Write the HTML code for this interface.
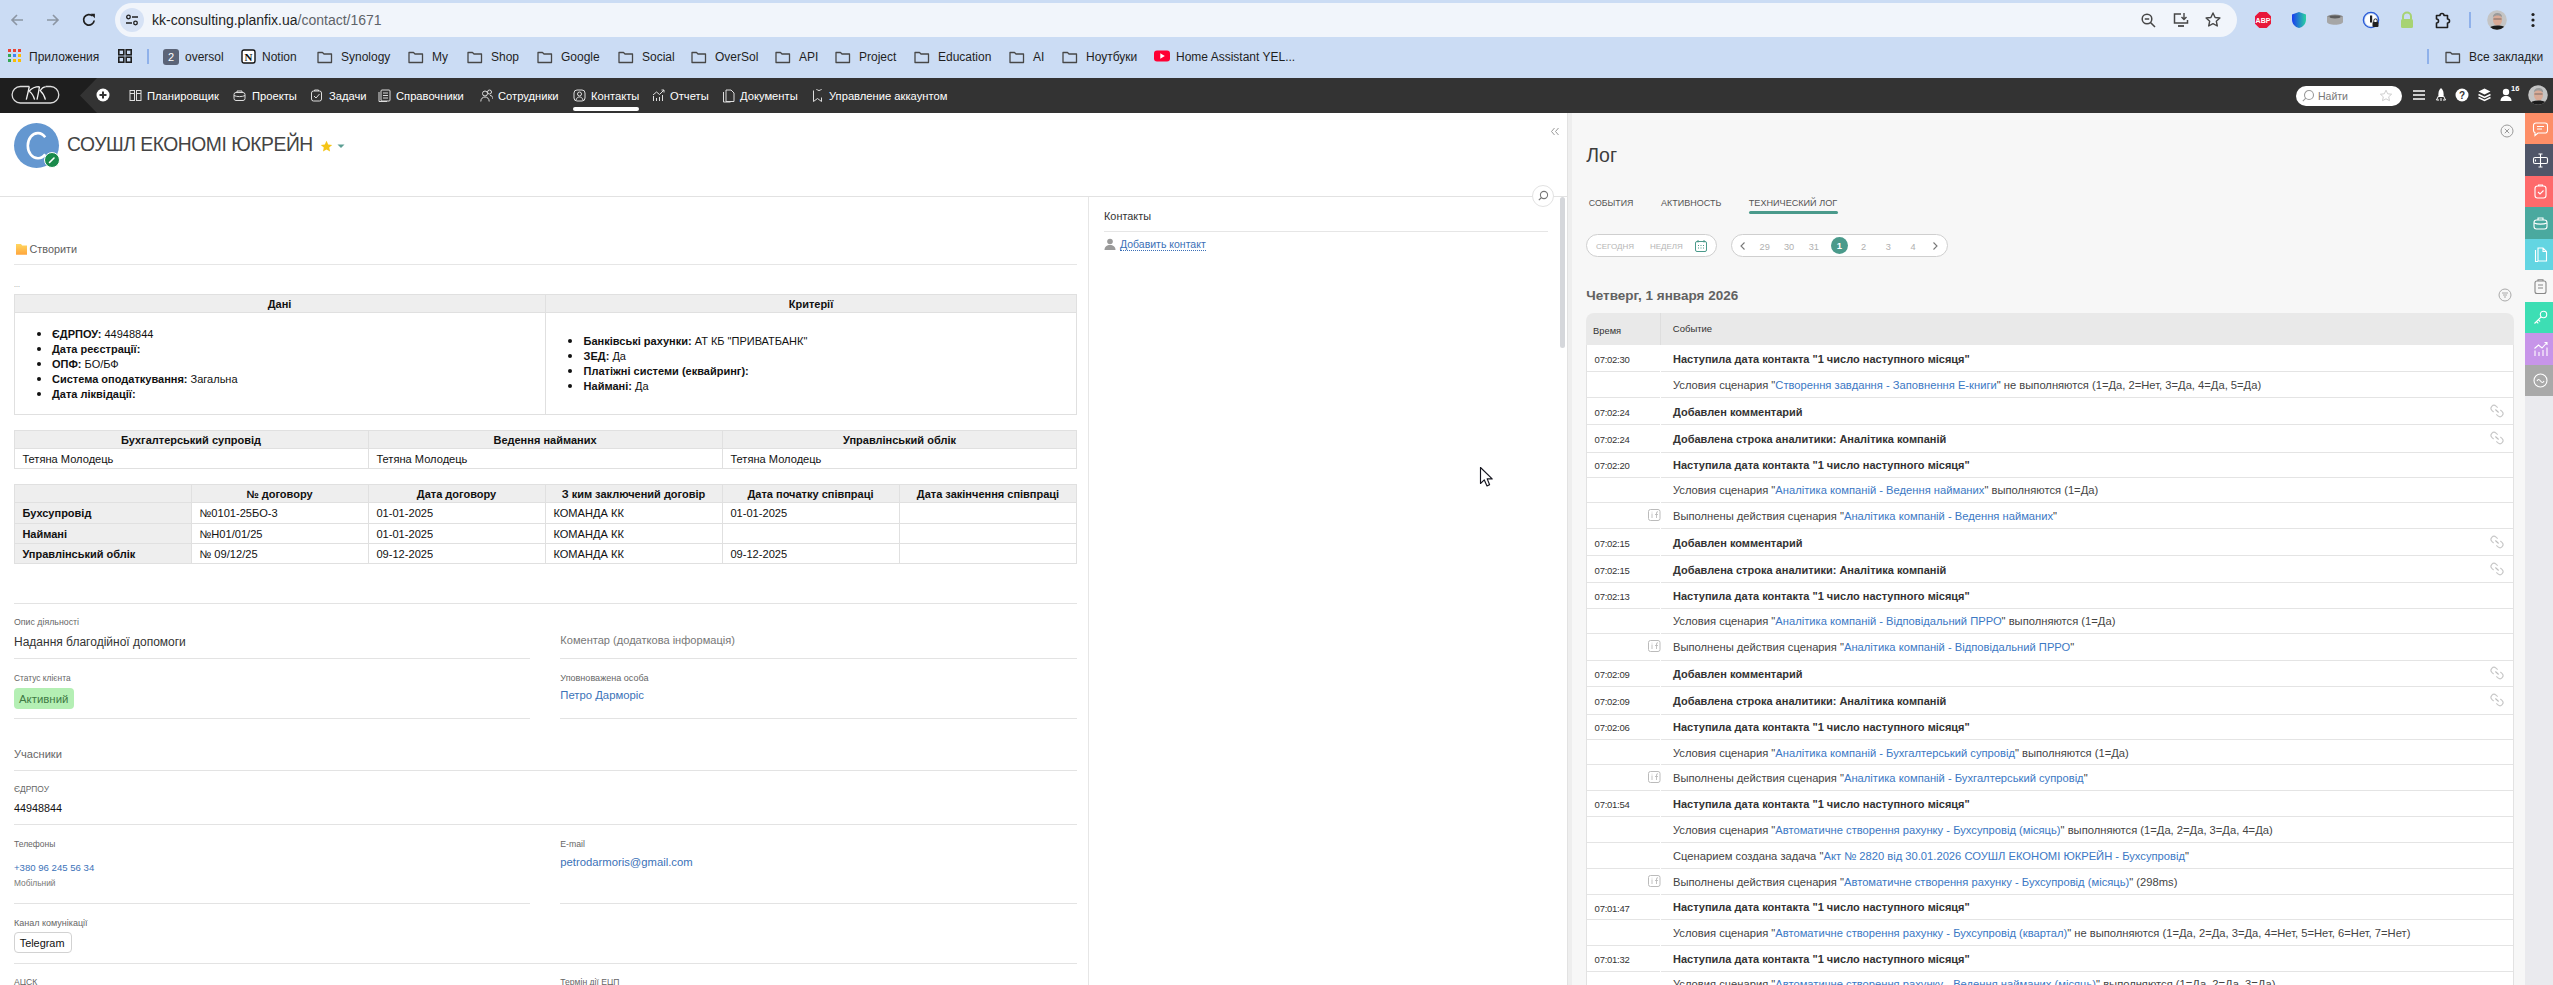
<!DOCTYPE html>
<html><head><meta charset="utf-8"><title>Planfix contact</title>
<style>
html,body{margin:0;padding:0;}
body{width:2553px;height:985px;overflow:hidden;position:relative;background:#fff;font-family:"Liberation Sans",sans-serif;}
.t{position:absolute;white-space:pre;}
.b{position:absolute;}
a{color:inherit;text-decoration:none;}
.lk{color:#3b78c4;}
</style></head><body>
<div class="b" style="left:0px;top:0px;width:2553px;height:78px;background:#cbdcf4;"></div>
<svg class="b" style="left:9px;top:12px;" width="16" height="16" viewBox="0 0 16 16"><path d="M14 8H3 M8 3L3 8l5 5" fill="none" stroke="#8c96a3" stroke-width="1.6"/></svg>
<svg class="b" style="left:45px;top:12px;" width="16" height="16" viewBox="0 0 16 16"><path d="M2 8h11 M8 3l5 5-5 5" fill="none" stroke="#8c96a3" stroke-width="1.6"/></svg>
<svg class="b" style="left:81px;top:12px;" width="16" height="16" viewBox="0 0 16 16"><path d="M13.2 8.5A5.3 5.3 0 1 1 11.6 4" fill="none" stroke="#1f1f1f" stroke-width="1.7"/><path d="M9.5 1.8h4.4v4.4z" fill="#1f1f1f"/></svg>
<div class="b" style="left:115px;top:3px;width:2122px;height:34px;background:#f1f5fb;border-radius:17px;"></div>
<div class="b" style="left:120px;top:8px;width:24px;height:24px;background:#d6e2f5;border-radius:12px;"></div>
<svg class="b" style="left:124px;top:12px;" width="16" height="16" viewBox="0 0 16 16"><circle cx="4.5" cy="5" r="1.8" fill="none" stroke="#1f1f1f" stroke-width="1.3"/><path d="M8 5h6 M2 11h6" stroke="#1f1f1f" stroke-width="1.3"/><circle cx="11.5" cy="11" r="1.8" fill="none" stroke="#1f1f1f" stroke-width="1.3"/></svg>
<div class="t " style="left:152px;top:10.00px;font-size:14px;line-height:20px;color:#1f1f1f;font-weight:400;">kk-consulting.planfix.ua<span style="color:#5e6369">/contact/1671</span></div>
<svg class="b" style="left:2140px;top:12px;" width="18" height="18" viewBox="0 0 18 18"><circle cx="7" cy="7" r="4.8" fill="none" stroke="#474747" stroke-width="1.5"/><path d="M4.8 7h4.4 M10.5 10.5l4.5 4.5" stroke="#474747" stroke-width="1.5"/></svg>
<svg class="b" style="left:2172px;top:11px;" width="18" height="18" viewBox="0 0 18 18"><path d="M9 3H2.5v9h13V9" fill="none" stroke="#474747" stroke-width="1.5"/><path d="M6 15h6" stroke="#474747" stroke-width="1.8"/><path d="M12 2v6 M9.5 6l2.5 2.5L14.5 6" fill="none" stroke="#474747" stroke-width="1.4"/></svg>
<svg class="b" style="left:2204px;top:11px;" width="18" height="18" viewBox="0 0 18 18"><path d="M9 2l2.1 4.5 4.8.5-3.6 3.2 1 4.8L9 12.6 4.7 15l1-4.8L2.1 7l4.8-.5z" fill="none" stroke="#474747" stroke-width="1.4" stroke-linejoin="round"/></svg>
<svg class="b" style="left:2254px;top:11px;" width="18" height="18" viewBox="0 0 18 18"><path d="M5.3 1h7.4L17 5.3v7.4L12.7 17H5.3L1 12.7V5.3z" fill="#e8173a"/><text x="9" y="12.2" font-family="Liberation Sans" font-weight="700" font-size="7" fill="#fff" text-anchor="middle">ABP</text></svg>
<svg class="b" style="left:2291px;top:11px;" width="16" height="18" viewBox="0 0 16 18"><defs><linearGradient id="sg" x1="0" x2="1"><stop offset="0" stop-color="#1a3cf0"/><stop offset="1" stop-color="#2ad3a0"/></linearGradient></defs><path d="M8 1l7 2.5v5c0 4.5-3 7.5-7 8.5-4-1-7-4-7-8.5v-5z" fill="url(#sg)"/></svg>
<svg class="b" style="left:2326px;top:13px;" width="18" height="14" viewBox="0 0 18 14"><ellipse cx="9" cy="4" rx="8" ry="2.6" fill="#8a8a8a"/><path d="M1 4v5c0 1.6 3.6 2.8 8 2.8s8-1.2 8-2.8V4" fill="#a6a6a6"/><ellipse cx="9" cy="4" rx="5.5" ry="1.4" fill="#5c5c5c"/></svg>
<svg class="b" style="left:2362px;top:11px;" width="18" height="18" viewBox="0 0 18 18"><circle cx="9" cy="9" r="7.6" fill="none" stroke="#2a5bd7" stroke-width="1.4"/><circle cx="9" cy="9" r="6" fill="#fff"/><rect x="8" y="4.5" width="2.2" height="7" fill="#1f1f1f"/><rect x="10.5" y="11" width="6" height="5" rx="1" fill="#1f1f1f"/><path d="M11.8 11v-1.4a1.7 1.7 0 0 1 3.4 0V11" fill="none" stroke="#1f1f1f" stroke-width="1"/></svg>
<svg class="b" style="left:2400px;top:11px;" width="14" height="18" viewBox="0 0 14 18"><path d="M3 8V5.5a4 4 0 0 1 8 0V8" fill="none" stroke="#a7d373" stroke-width="2"/><rect x="1" y="8" width="12" height="9" rx="1.5" fill="#a7d373"/></svg>
<svg class="b" style="left:2434px;top:11px;" width="18" height="18" viewBox="0 0 18 18"><path d="M2.5 4.5h3.5a2 2 0 0 1 4 0h3.5v3.5a2 2 0 0 1 0 4v4.5h-11v-4.5a2 2 0 0 0 0-4z" fill="none" stroke="#1f1f1f" stroke-width="1.6" stroke-linejoin="round"/></svg>
<div class="b" style="left:2469px;top:12px;width:2px;height:16px;background:#8fb1ea;"></div>
<svg class="b" style="left:2487px;top:10px;" width="20" height="20" viewBox="0 0 20 20"><defs><clipPath id="avc"><circle cx="10" cy="10" r="9.8"/></clipPath></defs><g clip-path="url(#avc)"><rect width="20" height="20" fill="#c4c4c4"/><ellipse cx="10.5" cy="9.8" rx="4.6" ry="5.8" fill="#d9aa96"/><path d="M5.8 7.5c0-3 2-4.6 4.7-4.6s4.7 1.6 4.7 4.6c-1.2-1.4-2.8-2-4.7-2s-3.5.6-4.7 2z" fill="#9a9a9a"/><path d="M6.5 9h8" stroke="#555" stroke-width="0.7"/><path d="M0 21c1.5-4 5-5.5 10.5-5.5S19 17 20.5 21z" fill="#1b1b1b"/></g></svg>
<svg class="b" style="left:2530px;top:11px;" width="6" height="18" viewBox="0 0 6 18"><circle cx="3" cy="3.5" r="1.6" fill="#1f1f1f"/><circle cx="3" cy="9" r="1.6" fill="#1f1f1f"/><circle cx="3" cy="14.5" r="1.6" fill="#1f1f1f"/></svg>
<svg class="b" style="left:8px;top:49px;" width="14" height="14" viewBox="0 0 14 14"><rect x="0" y="0" width="3" height="3" fill="#ea4335"/><rect x="5" y="0" width="3" height="3" fill="#ea4335"/><rect x="10" y="0" width="3" height="3" fill="#ea4335"/><rect x="0" y="5" width="3" height="3" fill="#34a853"/><rect x="5" y="5" width="3" height="3" fill="#4285f4"/><rect x="10" y="5" width="3" height="3" fill="#fbbc04"/><rect x="0" y="10" width="3" height="3" fill="#34a853"/><rect x="5" y="10" width="3" height="3" fill="#fbbc04"/><rect x="10" y="10" width="3" height="3" fill="#fbbc04"/></svg>
<div class="t " style="left:29px;top:48.50px;font-size:12px;line-height:16px;color:#1f1f1f;font-weight:400;">Приложения</div>
<svg class="b" style="left:118px;top:49px;" width="14" height="14" viewBox="0 0 14 14"><rect x="0.8" y="0.8" width="5" height="5" fill="none" stroke="#1f1f1f" stroke-width="1.6"/><rect x="8.2" y="0.8" width="5" height="5" fill="none" stroke="#1f1f1f" stroke-width="1.6"/><rect x="0.8" y="8.2" width="5" height="5" fill="none" stroke="#1f1f1f" stroke-width="1.6"/><rect x="8.2" y="8.2" width="5" height="5" fill="none" stroke="#1f1f1f" stroke-width="1.6"/></svg>
<div class="b" style="left:147px;top:49px;width:2px;height:15px;background:#8fb1ea;"></div>
<div class="b" style="left:163px;top:49px;width:16px;height:16px;background:#5b6477;border-radius:3px;"></div>
<div class="t " style="left:163px;top:48.50px;font-size:11px;line-height:16px;color:#fff;font-weight:400;"><span style="display:inline-block;width:16px;text-align:center">2</span></div>
<div class="t " style="left:185px;top:48.50px;font-size:12px;line-height:16px;color:#1f1f1f;font-weight:400;">oversol</div>
<svg class="b" style="left:241px;top:49px;" width="15" height="15" viewBox="0 0 15 15"><rect x="1" y="1" width="13" height="13" rx="2" fill="#fff" stroke="#111" stroke-width="1.4"/><text x="7.5" y="11.5" font-family="Liberation Serif" font-weight="700" font-size="11" fill="#111" text-anchor="middle">N</text></svg>
<div class="t " style="left:262px;top:48.50px;font-size:12px;line-height:16px;color:#1f1f1f;font-weight:400;">Notion</div>
<svg class="b" style="left:316px;top:48.5px;" width="18" height="16" viewBox="0 0 18 16"><path d="M2 3.5 h4.5 l1.5 1.5 h7.5 v8.5 h-13.5 z" fill="none" stroke="#474747" stroke-width="1.3" stroke-linejoin="round"/></svg>
<div class="t " style="left:341px;top:48.50px;font-size:12px;line-height:16px;color:#1f1f1f;font-weight:400;">Synology</div>
<svg class="b" style="left:407px;top:48.5px;" width="18" height="16" viewBox="0 0 18 16"><path d="M2 3.5 h4.5 l1.5 1.5 h7.5 v8.5 h-13.5 z" fill="none" stroke="#474747" stroke-width="1.3" stroke-linejoin="round"/></svg>
<div class="t " style="left:432px;top:48.50px;font-size:12px;line-height:16px;color:#1f1f1f;font-weight:400;">My</div>
<svg class="b" style="left:466px;top:48.5px;" width="18" height="16" viewBox="0 0 18 16"><path d="M2 3.5 h4.5 l1.5 1.5 h7.5 v8.5 h-13.5 z" fill="none" stroke="#474747" stroke-width="1.3" stroke-linejoin="round"/></svg>
<div class="t " style="left:491px;top:48.50px;font-size:12px;line-height:16px;color:#1f1f1f;font-weight:400;">Shop</div>
<svg class="b" style="left:536px;top:48.5px;" width="18" height="16" viewBox="0 0 18 16"><path d="M2 3.5 h4.5 l1.5 1.5 h7.5 v8.5 h-13.5 z" fill="none" stroke="#474747" stroke-width="1.3" stroke-linejoin="round"/></svg>
<div class="t " style="left:561px;top:48.50px;font-size:12px;line-height:16px;color:#1f1f1f;font-weight:400;">Google</div>
<svg class="b" style="left:617px;top:48.5px;" width="18" height="16" viewBox="0 0 18 16"><path d="M2 3.5 h4.5 l1.5 1.5 h7.5 v8.5 h-13.5 z" fill="none" stroke="#474747" stroke-width="1.3" stroke-linejoin="round"/></svg>
<div class="t " style="left:642px;top:48.50px;font-size:12px;line-height:16px;color:#1f1f1f;font-weight:400;">Social</div>
<svg class="b" style="left:690px;top:48.5px;" width="18" height="16" viewBox="0 0 18 16"><path d="M2 3.5 h4.5 l1.5 1.5 h7.5 v8.5 h-13.5 z" fill="none" stroke="#474747" stroke-width="1.3" stroke-linejoin="round"/></svg>
<div class="t " style="left:715px;top:48.50px;font-size:12px;line-height:16px;color:#1f1f1f;font-weight:400;">OverSol</div>
<svg class="b" style="left:774px;top:48.5px;" width="18" height="16" viewBox="0 0 18 16"><path d="M2 3.5 h4.5 l1.5 1.5 h7.5 v8.5 h-13.5 z" fill="none" stroke="#474747" stroke-width="1.3" stroke-linejoin="round"/></svg>
<div class="t " style="left:799px;top:48.50px;font-size:12px;line-height:16px;color:#1f1f1f;font-weight:400;">API</div>
<svg class="b" style="left:834px;top:48.5px;" width="18" height="16" viewBox="0 0 18 16"><path d="M2 3.5 h4.5 l1.5 1.5 h7.5 v8.5 h-13.5 z" fill="none" stroke="#474747" stroke-width="1.3" stroke-linejoin="round"/></svg>
<div class="t " style="left:859px;top:48.50px;font-size:12px;line-height:16px;color:#1f1f1f;font-weight:400;">Project</div>
<svg class="b" style="left:913px;top:48.5px;" width="18" height="16" viewBox="0 0 18 16"><path d="M2 3.5 h4.5 l1.5 1.5 h7.5 v8.5 h-13.5 z" fill="none" stroke="#474747" stroke-width="1.3" stroke-linejoin="round"/></svg>
<div class="t " style="left:938px;top:48.50px;font-size:12px;line-height:16px;color:#1f1f1f;font-weight:400;">Education</div>
<svg class="b" style="left:1008px;top:48.5px;" width="18" height="16" viewBox="0 0 18 16"><path d="M2 3.5 h4.5 l1.5 1.5 h7.5 v8.5 h-13.5 z" fill="none" stroke="#474747" stroke-width="1.3" stroke-linejoin="round"/></svg>
<div class="t " style="left:1033px;top:48.50px;font-size:12px;line-height:16px;color:#1f1f1f;font-weight:400;">AI</div>
<svg class="b" style="left:1061px;top:48.5px;" width="18" height="16" viewBox="0 0 18 16"><path d="M2 3.5 h4.5 l1.5 1.5 h7.5 v8.5 h-13.5 z" fill="none" stroke="#474747" stroke-width="1.3" stroke-linejoin="round"/></svg>
<div class="t " style="left:1086px;top:48.50px;font-size:12px;line-height:16px;color:#1f1f1f;font-weight:400;">Ноутбуки</div>
<svg class="b" style="left:1154px;top:50px;" width="16" height="12" viewBox="0 0 16 12"><rect x="0" y="0.5" width="16" height="11" rx="3" fill="#ff0033"/><path d="M6.3 3.3v5.4L10.8 6z" fill="#fff"/></svg>
<div class="t " style="left:1176px;top:48.50px;font-size:12px;line-height:16px;color:#1f1f1f;font-weight:400;">Home Assistant YEL...</div>
<div class="b" style="left:2427px;top:49px;width:2px;height:15px;background:#8fb1ea;"></div>
<svg class="b" style="left:2444px;top:48.5px;" width="18" height="16" viewBox="0 0 18 16"><path d="M2 3.5 h4.5 l1.5 1.5 h7.5 v8.5 h-13.5 z" fill="none" stroke="#474747" stroke-width="1.3" stroke-linejoin="round"/></svg>
<div class="t " style="left:2469px;top:48.50px;font-size:12px;line-height:16px;color:#1f1f1f;font-weight:400;">Все закладки</div>
<div class="b" style="left:0px;top:78px;width:2553px;height:35px;background:#333333;"></div>
<svg class="b" style="left:0px;top:78px;" width="97" height="35" viewBox="0 0 97 35"><path d="M0 0H97L80 17.5L97 35H0z" fill="#1e1e1e"/></svg>
<svg class="b" style="left:11px;top:85px;" width="50" height="20" viewBox="0 0 50 20"><g transform="translate(-11 -85)" fill="none" stroke-width="1.3"><path d="M29.3 86.5H20.35A8.25 8.25 0 0 0 20.35 103H50.55A8.25 8.25 0 0 0 50.55 86.5H45.6" stroke="#dcdcdc"/><path d="M29.3 86.5Q28 93 26.3 99.6M29 91.3Q33 86.6 39.5 86.6M29.5 91.5Q33 94 34.6 99.6M39.5 86.6Q38.5 93 37 99.6M40 91Q42.5 86.9 45.6 86.9M40.5 91Q44 94 45.4 99.6" stroke="#f0f0f0"/></g></svg>
<svg class="b" style="left:96px;top:88px;" width="14" height="14" viewBox="0 0 14 14"><circle cx="7" cy="7" r="6.5" fill="#fff"/><path d="M7 3.5v7 M3.5 7h7" stroke="#333" stroke-width="2"/></svg>
<svg class="b" style="left:129px;top:89px;" width="13" height="14" viewBox="0 0 13 14"><rect x="1" y="1.5" width="4.5" height="10" fill="none" stroke="#ddd" stroke-width="1"/><rect x="7.5" y="1.5" width="4.5" height="10" fill="none" stroke="#ddd" stroke-width="1"/><path d="M1 4.5h4.5 M7.5 4.5h4.5" stroke="#ddd"/></svg>
<div class="t " style="left:147px;top:88.00px;font-size:11.2px;line-height:16px;color:#ffffff;font-weight:400;">Планировщик</div>
<svg class="b" style="left:233px;top:89px;" width="13" height="14" viewBox="0 0 13 14"><rect x="1" y="3.5" width="11" height="8" rx="2" fill="none" stroke="#ddd" stroke-width="1"/><path d="M1 6.5c3 1.5 8 1.5 11 0 M4 3.5V2h5v1.5" fill="none" stroke="#ddd"/></svg>
<div class="t " style="left:252px;top:88.00px;font-size:11.2px;line-height:16px;color:#ffffff;font-weight:400;">Проекты</div>
<svg class="b" style="left:310px;top:89px;" width="13" height="14" viewBox="0 0 13 14"><rect x="1.5" y="2" width="10" height="10" rx="2" fill="none" stroke="#ddd" stroke-width="1"/><path d="M4 7l2 2 3.5-4 M4.5 2V1h4v1" fill="none" stroke="#ddd"/></svg>
<div class="t " style="left:329px;top:88.00px;font-size:11.2px;line-height:16px;color:#ffffff;font-weight:400;">Задачи</div>
<svg class="b" style="left:378px;top:89px;" width="13" height="14" viewBox="0 0 13 14"><rect x="3" y="1" width="9" height="11" rx="1" fill="none" stroke="#ddd" stroke-width="1"/><path d="M1 3v9.5h8 M5 4h5 M5 6.5h5 M5 9h5" fill="none" stroke="#ddd"/></svg>
<div class="t " style="left:396px;top:88.00px;font-size:11.2px;line-height:16px;color:#ffffff;font-weight:400;">Справочники</div>
<svg class="b" style="left:480px;top:89px;" width="13" height="14" viewBox="0 0 13 14"><circle cx="5" cy="4.5" r="2.5" fill="none" stroke="#ddd"/><path d="M0.8 12.5c0-3 2-4.5 4.2-4.5s4.2 1.5 4.2 4.5" fill="none" stroke="#ddd"/><circle cx="9.5" cy="3" r="2" fill="none" stroke="#ddd"/><path d="M10 6.5c1.5 0 3 1 3 3.5" fill="none" stroke="#ddd"/></svg>
<div class="t " style="left:498px;top:88.00px;font-size:11.2px;line-height:16px;color:#ffffff;font-weight:400;">Сотрудники</div>
<svg class="b" style="left:573px;top:89px;" width="13" height="14" viewBox="0 0 13 14"><rect x="1" y="1" width="11" height="11" rx="3" fill="none" stroke="#ddd"/><circle cx="6.5" cy="5" r="2" fill="none" stroke="#ddd"/><path d="M3 11c.5-2 1.8-3 3.5-3s3 1 3.5 3" fill="none" stroke="#ddd"/></svg>
<div class="t " style="left:591px;top:88.00px;font-size:11.2px;line-height:16px;color:#ffffff;font-weight:400;">Контакты</div>
<svg class="b" style="left:652px;top:89px;" width="13" height="14" viewBox="0 0 13 14"><path d="M1.5 12V7 M4.5 12V9 M7.5 12V8 M10.5 12V6 M1 6l3.5-3 3 2.5L12 1 M9.5 1H12v2.5" fill="none" stroke="#ddd"/></svg>
<div class="t " style="left:670px;top:88.00px;font-size:11.2px;line-height:16px;color:#ffffff;font-weight:400;">Отчеты</div>
<svg class="b" style="left:722px;top:89px;" width="13" height="14" viewBox="0 0 13 14"><path d="M4 1h5l3 3v8.5H4z M1.5 3v10h7" fill="none" stroke="#ddd"/></svg>
<div class="t " style="left:740px;top:88.00px;font-size:11.2px;line-height:16px;color:#ffffff;font-weight:400;">Документы</div>
<svg class="b" style="left:812px;top:89px;" width="13" height="14" viewBox="0 0 13 14"><path d="M1.5 1.5v11l4-3 4 3v-4 M7 1.5a3 3 0 1 1 0.01 0" fill="none" stroke="#ddd"/></svg>
<div class="t " style="left:829px;top:88.00px;font-size:11.2px;line-height:16px;color:#ffffff;font-weight:400;">Управление аккаунтом</div>
<div class="b" style="left:573px;top:107px;width:66px;height:4px;background:#fff;border-radius:2px;"></div>
<div class="b" style="left:2296px;top:86px;width:106px;height:20px;background:#fff;border-radius:10px;"></div>
<svg class="b" style="left:2301px;top:89px;" width="14" height="14" viewBox="0 0 14 14"><circle cx="8" cy="6" r="4.5" fill="none" stroke="#9a9a9a" stroke-width="1.1"/><path d="M4.8 9.2L1.8 12.2" stroke="#9a9a9a" stroke-width="1.1"/></svg>
<div class="t " style="left:2318px;top:89.00px;font-size:10.5px;line-height:14px;color:#777;font-weight:400;">Найти</div>
<svg class="b" style="left:2379px;top:89px;" width="14" height="14" viewBox="0 0 14 14"><path d="M7 1.2l1.7 3.6 3.9.4-2.9 2.6.8 3.9L7 9.8l-3.5 1.9.8-3.9L1.4 5.2l3.9-.4z" fill="none" stroke="#c8c8c8" stroke-width="0.9"/></svg>
<svg class="b" style="left:2412px;top:89px;" width="14" height="12" viewBox="0 0 14 12"><path d="M1 2h12 M1 6h12 M1 10h12" stroke="#fff" stroke-width="1.6"/></svg>
<svg class="b" style="left:2435px;top:87px;" width="12" height="16" viewBox="0 0 12 16"><path d="M6 1c2.5 2 3 5 2.5 9h-5C3 6 3.5 3 6 1z" fill="#fff"/><path d="M3.5 9L1.5 13h2.5 M8.5 9l2 4H8 M6 11v3" stroke="#fff" stroke-width="1" fill="none"/></svg>
<svg class="b" style="left:2455px;top:88px;" width="14" height="14" viewBox="0 0 14 14"><circle cx="7" cy="7" r="6.5" fill="#fff"/><text x="7" y="11" font-family="Liberation Sans" font-weight="700" font-size="10" fill="#333" text-anchor="middle">?</text></svg>
<svg class="b" style="left:2477px;top:87px;" width="15" height="16" viewBox="0 0 15 16"><path d="M7.5 1.5l6 3-6 3-6-3z" fill="#fff"/><path d="M1.5 7.5l6 3 6-3 M1.5 10.5l6 3 6-3" fill="none" stroke="#fff" stroke-width="1.5"/></svg>
<svg class="b" style="left:2500px;top:88px;" width="12" height="14" viewBox="0 0 12 14"><circle cx="6" cy="4" r="3.2" fill="#fff"/><path d="M0.5 13c0-3.5 2.5-5 5.5-5s5.5 1.5 5.5 5z" fill="#fff"/></svg>
<div class="t " style="left:2511px;top:84.00px;font-size:7.5px;line-height:10px;color:#fff;font-weight:700;">16</div>
<svg class="b" style="left:2528px;top:85px;" width="20" height="20" viewBox="0 0 20 20"><defs><clipPath id="avc"><circle cx="10" cy="10" r="9.8"/></clipPath></defs><g clip-path="url(#avc)"><rect width="20" height="20" fill="#c4c4c4"/><ellipse cx="10.5" cy="9.8" rx="4.6" ry="5.8" fill="#d9aa96"/><path d="M5.8 7.5c0-3 2-4.6 4.7-4.6s4.7 1.6 4.7 4.6c-1.2-1.4-2.8-2-4.7-2s-3.5.6-4.7 2z" fill="#9a9a9a"/><path d="M6.5 9h8" stroke="#555" stroke-width="0.7"/><path d="M0 21c1.5-4 5-5.5 10.5-5.5S19 17 20.5 21z" fill="#1b1b1b"/></g></svg>
<div class="b" style="left:14px;top:123px;width:45px;height:45px;background:#6497d0;border-radius:50%;"></div>
<svg class="b" style="left:14px;top:123px;" width="45" height="45" viewBox="0 0 45 45"><path d="M31.2 14.2A10 12.6 0 1 0 31.2 31.2" fill="none" stroke="#fff" stroke-width="2.6"/></svg>
<div class="b" style="left:44px;top:152px;width:16px;height:16px;background:#1a8a4b;border-radius:50%;border:1.5px solid #fff;box-sizing:border-box;"></div>
<svg class="b" style="left:47px;top:155px;" width="10" height="10" viewBox="0 0 10 10"><path d="M2.5 7.5L7 3" stroke="#fff" stroke-width="1.6" stroke-linecap="round"/></svg>
<div class="t " style="left:67px;top:133.30px;font-size:19.3px;line-height:24px;color:#444;font-weight:400;letter-spacing:-0.45px;">СОУШЛ ЕКОНОМІ ЮКРЕЙН</div>
<svg class="b" style="left:320px;top:140px;" width="13" height="13" viewBox="0 0 13 13"><path d="M6.5 .8l1.7 3.7 4 .4-3 2.7.9 4L6.5 9.6 3 11.6l.8-4-3-2.7 4-.4z" fill="#f5c518"/></svg>
<svg class="b" style="left:337px;top:144px;" width="8" height="5" viewBox="0 0 8 5"><path d="M0.5 0.5h7L4 4z" fill="#5c9e93"/></svg>
<svg class="b" style="left:1550px;top:127px;" width="10" height="9" viewBox="0 0 10 9"><path d="M4.5 1L1.5 4.5l3 3.5 M8.5 1l-3 3.5 3 3.5" fill="none" stroke="#999" stroke-width="1"/></svg>
<div class="b" style="left:0px;top:196px;width:1567px;height:1px;background:#e2e2e2;"></div>
<div class="b" style="left:1532px;top:185px;width:22px;height:22px;background:#fff;border:1px solid #e2e2e2;border-radius:50%;box-sizing:border-box;"></div>
<svg class="b" style="left:1537px;top:190px;" width="12" height="12" viewBox="0 0 12 12"><circle cx="7" cy="5" r="3.6" fill="none" stroke="#777" stroke-width="1.1"/><path d="M4.5 7.5L1.8 10.2" stroke="#777" stroke-width="1.1"/></svg>
<div class="b" style="left:1560px;top:197px;width:5px;height:151px;background:#d5d7db;border-radius:3px;"></div>
<div class="b" style="left:1567px;top:113px;width:5px;height:872px;background:#eeeeee;border-left:1px solid #e2e2e2;box-sizing:border-box;"></div>
<div class="b" style="left:1088px;top:197px;width:1px;height:788px;background:#e6e6e6;"></div>
<div class="t " style="left:1104px;top:209.00px;font-size:10.9px;line-height:14px;color:#333;font-weight:400;">Контакты</div>
<div class="b" style="left:1104px;top:231px;width:444px;height:1px;background:#e6e6e6;"></div>
<svg class="b" style="left:1104px;top:238px;" width="12" height="12" viewBox="0 0 12 12"><circle cx="6" cy="3.5" r="2.8" fill="#9a9a9a"/><path d="M0.5 12c0-3.5 2.5-5 5.5-5s5.5 1.5 5.5 5z" fill="#9a9a9a"/></svg>
<div class="t " style="left:1120px;top:237.00px;font-size:10.5px;line-height:14px;color:#3b6fb6;font-weight:400;"><span style="border-bottom:1px dotted #3b6fb6;">Добавить контакт</span></div>
<svg class="b" style="left:16px;top:244px;" width="12" height="11" viewBox="0 0 12 11"><defs><linearGradient id="fg" x1="0" y1="0" x2="0" y2="1"><stop offset="0" stop-color="#ffd760"/><stop offset="1" stop-color="#ffa53c"/></linearGradient></defs><path d="M0 0h5l1.2 1.6H11v9.2H0z" fill="url(#fg)"/></svg>
<div class="t " style="left:29.5px;top:242.00px;font-size:10.85px;line-height:14px;color:#606060;font-weight:400;">Створити</div>
<div class="b" style="left:14px;top:264px;width:1063px;height:1px;background:#e6e6e6;"></div>
<div class="t " style="left:14px;top:281.00px;font-size:7px;line-height:8px;color:#888;font-weight:400;">...</div>
<div class="b" style="left:14px;top:294px;width:1063px;height:121px;border:1px solid #e0e0e0;box-sizing:border-box;"></div>
<div class="b" style="left:15px;top:295px;width:1061px;height:17px;background:#eeeeee;border-bottom:1px solid #e0e0e0;"></div>
<div class="b" style="left:545px;top:294px;width:1px;height:121px;background:#e0e0e0;"></div>
<div class="t" style="left:14px;width:531px;text-align:center;top:296.80px;font-size:11px;line-height:14px;color:#111;font-weight:700;">Дані</div>
<div class="t" style="left:545px;width:532px;text-align:center;top:296.80px;font-size:11px;line-height:14px;color:#111;font-weight:700;">Критерії</div>
<div class="b" style="left:37px;top:332px;width:4px;height:4px;background:#111;border-radius:50%;"></div>
<div class="t " style="left:52px;top:326.70px;font-size:11px;line-height:15px;color:#111;font-weight:400;"><b>ЄДРПОУ:</b> 44948844</div>
<div class="b" style="left:37px;top:347px;width:4px;height:4px;background:#111;border-radius:50%;"></div>
<div class="t " style="left:52px;top:341.70px;font-size:11px;line-height:15px;color:#111;font-weight:400;"><b>Дата реєстрації:</b></div>
<div class="b" style="left:37px;top:362px;width:4px;height:4px;background:#111;border-radius:50%;"></div>
<div class="t " style="left:52px;top:356.70px;font-size:11px;line-height:15px;color:#111;font-weight:400;"><b>ОПФ:</b> БО/БФ</div>
<div class="b" style="left:37px;top:377px;width:4px;height:4px;background:#111;border-radius:50%;"></div>
<div class="t " style="left:52px;top:371.70px;font-size:11px;line-height:15px;color:#111;font-weight:400;"><b>Система оподаткування:</b> Загальна</div>
<div class="b" style="left:37px;top:392px;width:4px;height:4px;background:#111;border-radius:50%;"></div>
<div class="t " style="left:52px;top:386.70px;font-size:11px;line-height:15px;color:#111;font-weight:400;"><b>Дата ліквідації:</b></div>
<div class="b" style="left:568px;top:339px;width:4px;height:4px;background:#111;border-radius:50%;"></div>
<div class="t " style="left:583.6px;top:333.50px;font-size:11px;line-height:15px;color:#111;font-weight:400;"><b>Банківські рахунки:</b> АТ КБ &quot;ПРИВАТБАНК&quot;</div>
<div class="b" style="left:568px;top:354px;width:4px;height:4px;background:#111;border-radius:50%;"></div>
<div class="t " style="left:583.6px;top:348.50px;font-size:11px;line-height:15px;color:#111;font-weight:400;"><b>ЗЕД:</b> Да</div>
<div class="b" style="left:568px;top:369px;width:4px;height:4px;background:#111;border-radius:50%;"></div>
<div class="t " style="left:583.6px;top:363.50px;font-size:11px;line-height:15px;color:#111;font-weight:400;"><b>Платіжні системи (еквайринг):</b></div>
<div class="b" style="left:568px;top:384px;width:4px;height:4px;background:#111;border-radius:50%;"></div>
<div class="t " style="left:583.6px;top:378.50px;font-size:11px;line-height:15px;color:#111;font-weight:400;"><b>Наймані:</b> Да</div>
<div class="b" style="left:14px;top:430px;width:1063px;height:39px;border:1px solid #e0e0e0;box-sizing:border-box;"></div>
<div class="b" style="left:15px;top:431px;width:1061px;height:17px;background:#eeeeee;"></div>
<div class="b" style="left:15px;top:448px;width:1061px;height:1px;background:#e0e0e0;"></div>
<div class="b" style="left:368px;top:430px;width:1px;height:39px;background:#e0e0e0;"></div>
<div class="b" style="left:722px;top:430px;width:1px;height:39px;background:#e0e0e0;"></div>
<div class="t" style="left:14px;width:354px;text-align:center;top:433.20px;font-size:11px;line-height:14px;color:#111;font-weight:700;">Бухгалтерський супровід</div>
<div class="t " style="left:22.4px;top:452.30px;font-size:11.1px;line-height:14px;color:#111;font-weight:400;">Тетяна Молодець</div>
<div class="t" style="left:368px;width:354px;text-align:center;top:433.20px;font-size:11px;line-height:14px;color:#111;font-weight:700;">Ведення найманих</div>
<div class="t " style="left:376.4px;top:452.30px;font-size:11.1px;line-height:14px;color:#111;font-weight:400;">Тетяна Молодець</div>
<div class="t" style="left:722px;width:355px;text-align:center;top:433.20px;font-size:11px;line-height:14px;color:#111;font-weight:700;">Управлінський облік</div>
<div class="t " style="left:730.4px;top:452.30px;font-size:11.1px;line-height:14px;color:#111;font-weight:400;">Тетяна Молодець</div>
<div class="b" style="left:14px;top:484px;width:1063px;height:80px;border:1px solid #e0e0e0;box-sizing:border-box;"></div>
<div class="b" style="left:15px;top:485px;width:1061px;height:17px;background:#eeeeee;"></div>
<div class="b" style="left:15px;top:502px;width:176px;height:61px;background:#eeeeee;"></div>
<div class="b" style="left:15px;top:502px;width:1061px;height:1px;background:#e0e0e0;"></div>
<div class="b" style="left:15px;top:523px;width:1061px;height:1px;background:#e0e0e0;"></div>
<div class="b" style="left:15px;top:543px;width:1061px;height:1px;background:#e0e0e0;"></div>
<div class="b" style="left:191px;top:484px;width:1px;height:80px;background:#e0e0e0;"></div>
<div class="b" style="left:368px;top:484px;width:1px;height:80px;background:#e0e0e0;"></div>
<div class="b" style="left:545px;top:484px;width:1px;height:80px;background:#e0e0e0;"></div>
<div class="b" style="left:722px;top:484px;width:1px;height:80px;background:#e0e0e0;"></div>
<div class="b" style="left:899px;top:484px;width:1px;height:80px;background:#e0e0e0;"></div>
<div class="t" style="left:191px;width:177px;text-align:center;top:487.00px;font-size:11px;line-height:14px;color:#111;font-weight:700;">№ договору</div>
<div class="t" style="left:368px;width:177px;text-align:center;top:487.00px;font-size:11px;line-height:14px;color:#111;font-weight:700;">Дата договору</div>
<div class="t" style="left:545px;width:177px;text-align:center;top:487.00px;font-size:11px;line-height:14px;color:#111;font-weight:700;">З ким заключений договір</div>
<div class="t" style="left:722px;width:177px;text-align:center;top:487.00px;font-size:11px;line-height:14px;color:#111;font-weight:700;">Дата початку співпраці</div>
<div class="t" style="left:899px;width:178px;text-align:center;top:487.00px;font-size:11px;line-height:14px;color:#111;font-weight:700;">Дата закінчення співпраці</div>
<div class="t " style="left:22.4px;top:506.20px;font-size:11px;line-height:14px;color:#111;font-weight:700;">Бухсупровід</div>
<div class="t " style="left:199.4px;top:506.20px;font-size:11.1px;line-height:14px;color:#111;font-weight:400;">№0101-25БО-3</div>
<div class="t " style="left:376.4px;top:506.20px;font-size:11.1px;line-height:14px;color:#111;font-weight:400;">01-01-2025</div>
<div class="t " style="left:553.4px;top:506.20px;font-size:11.1px;line-height:14px;color:#111;font-weight:400;">КОМАНДА КК</div>
<div class="t " style="left:730.4px;top:506.20px;font-size:11.1px;line-height:14px;color:#111;font-weight:400;">01-01-2025</div>
<div class="t " style="left:22.4px;top:526.60px;font-size:11px;line-height:14px;color:#111;font-weight:700;">Наймані</div>
<div class="t " style="left:199.4px;top:526.60px;font-size:11.1px;line-height:14px;color:#111;font-weight:400;">№Н01/01/25</div>
<div class="t " style="left:376.4px;top:526.60px;font-size:11.1px;line-height:14px;color:#111;font-weight:400;">01-01-2025</div>
<div class="t " style="left:553.4px;top:526.60px;font-size:11.1px;line-height:14px;color:#111;font-weight:400;">КОМАНДА КК</div>
<div class="t " style="left:22.4px;top:546.80px;font-size:11px;line-height:14px;color:#111;font-weight:700;">Управлінський облік</div>
<div class="t " style="left:199.4px;top:546.80px;font-size:11.1px;line-height:14px;color:#111;font-weight:400;">№ 09/12/25</div>
<div class="t " style="left:376.4px;top:546.80px;font-size:11.1px;line-height:14px;color:#111;font-weight:400;">09-12-2025</div>
<div class="t " style="left:553.4px;top:546.80px;font-size:11.1px;line-height:14px;color:#111;font-weight:400;">КОМАНДА КК</div>
<div class="t " style="left:730.4px;top:546.80px;font-size:11.1px;line-height:14px;color:#111;font-weight:400;">09-12-2025</div>
<div class="b" style="left:14px;top:603px;width:1063px;height:1px;background:#e3e3e3;"></div>
<div class="t " style="left:14px;top:616.40px;font-size:8.8px;line-height:12px;color:#666;font-weight:400;">Опис діяльності</div>
<div class="t " style="left:14px;top:633.70px;font-size:12px;line-height:16px;color:#333;font-weight:400;">Надання благодійної допомоги</div>
<div class="b" style="left:14px;top:658px;width:516px;height:1px;background:#e3e3e3;"></div>
<div class="t " style="left:560.3px;top:633.30px;font-size:11.07px;line-height:15px;color:#777;font-weight:400;">Коментар (додаткова інформація)</div>
<div class="b" style="left:560px;top:658px;width:517px;height:1px;background:#e3e3e3;"></div>
<div class="t " style="left:14px;top:671.50px;font-size:8.4px;line-height:12px;color:#666;font-weight:400;">Статус клієнта</div>
<div class="b" style="left:14px;top:688px;width:60px;height:21px;background:#b4efb4;border-radius:4px;"></div>
<div class="t " style="left:19px;top:691.50px;font-size:11.4px;line-height:14px;color:#3f7a45;font-weight:400;">Активний</div>
<div class="b" style="left:14px;top:718px;width:516px;height:1px;background:#e3e3e3;"></div>
<div class="t " style="left:560.3px;top:671.50px;font-size:9.06px;line-height:12px;color:#666;font-weight:400;">Уповноважена особа</div>
<div class="t " style="left:560.3px;top:688.40px;font-size:11.3px;line-height:15px;color:#3b72b8;font-weight:400;">Петро Дарморіс</div>
<div class="b" style="left:560px;top:718px;width:517px;height:1px;background:#e3e3e3;"></div>
<div class="t " style="left:14px;top:747.30px;font-size:11.1px;line-height:15px;color:#666;font-weight:400;">Учасники</div>
<div class="b" style="left:14px;top:770px;width:1063px;height:1px;background:#e3e3e3;"></div>
<div class="t " style="left:14px;top:783.30px;font-size:8.4px;line-height:12px;color:#666;font-weight:400;">ЄДРПОУ</div>
<div class="t " style="left:14px;top:800.80px;font-size:10.8px;line-height:14px;color:#111;font-weight:400;">44948844</div>
<div class="b" style="left:14px;top:824px;width:1063px;height:1px;background:#e3e3e3;"></div>
<div class="t " style="left:14px;top:837.60px;font-size:8.5px;line-height:12px;color:#666;font-weight:400;">Телефоны</div>
<div class="t " style="left:14px;top:860.50px;font-size:9.6px;line-height:13px;color:#3b72b8;font-weight:400;">+380 96 245 56 34</div>
<div class="t " style="left:14px;top:878.40px;font-size:8.35px;line-height:11px;color:#777;font-weight:400;">Мобільний</div>
<div class="b" style="left:14px;top:903px;width:516px;height:1px;background:#e3e3e3;"></div>
<div class="t " style="left:560.3px;top:837.50px;font-size:8.7px;line-height:12px;color:#666;font-weight:400;">E-mail</div>
<div class="t " style="left:560.3px;top:854.50px;font-size:11.27px;line-height:15px;color:#3b72b8;font-weight:400;">petrodarmoris@gmail.com</div>
<div class="b" style="left:560px;top:903px;width:517px;height:1px;background:#e3e3e3;"></div>
<div class="t " style="left:14px;top:916.50px;font-size:9px;line-height:12px;color:#666;font-weight:400;">Канал комунікації</div>
<div class="b" style="left:14px;top:932px;width:58px;height:21px;background:#fff;border:1px solid #d2d2d2;border-radius:4px;box-sizing:border-box;"></div>
<div class="t " style="left:19.7px;top:935.50px;font-size:10.9px;line-height:14px;color:#111;font-weight:400;">Telegram</div>
<div class="b" style="left:14px;top:963px;width:1063px;height:1px;background:#e3e3e3;"></div>
<div class="t " style="left:14px;top:976.00px;font-size:8.6px;line-height:12px;color:#666;font-weight:400;">АЦСК</div>
<div class="t " style="left:560.3px;top:976.00px;font-size:8.6px;line-height:12px;color:#666;font-weight:400;">Термін дії ЕЦП</div>
<svg class="b" style="left:1478px;top:465px;" width="18" height="24" viewBox="0 0 18 24"><path d="M2.5 2.5V18.5L6.3 14.9L9 20.9L11.6 19.8L9.2 13.9H14.2Z" fill="#fff" stroke="#15151f" stroke-width="1.15" stroke-linejoin="round"/></svg>
<div class="b" style="left:1572px;top:113px;width:953px;height:872px;background:#f7f7f7;"></div>
<div class="b" style="left:2525px;top:113px;width:28px;height:872px;background:#eaeaee;"></div>
<div class="b" style="left:2525px;top:113px;width:28px;height:31px;background:#fd8e67;"></div>
<svg class="b" style="left:2532px;top:120.0px;" width="17" height="17" viewBox="0 0 17 17"><path d="M4 3h9a2.5 2.5 0 0 1 2.5 2.5v5A2.5 2.5 0 0 1 13 13H6l-3 2.5v-2.8A2.5 2.5 0 0 1 1.5 10.5v-5A2.5 2.5 0 0 1 4 3z M5 6.5h7 M5 9h5" fill="none" stroke="#fff" stroke-width="1.1"/></svg>
<div class="b" style="left:2525px;top:144px;width:28px;height:32px;background:#4f5568;"></div>
<svg class="b" style="left:2532px;top:151.5px;" width="17" height="17" viewBox="0 0 17 17"><rect x="1.5" y="5.5" width="14" height="6" rx="1.5" fill="none" stroke="#fff" stroke-width="1.1"/><path d="M8.5 2v13 M6.5 2h4 M6.5 15h4 M3.5 7.5v2" stroke="#fff" stroke-width="1.1"/></svg>
<div class="b" style="left:2525px;top:176px;width:28px;height:31px;background:#fe6a6b;"></div>
<svg class="b" style="left:2532px;top:183.0px;" width="17" height="17" viewBox="0 0 17 17"><rect x="3" y="3" width="11" height="12" rx="2.5" fill="none" stroke="#fff" stroke-width="1.1"/><path d="M6 9l2 2 3.5-3.5 M6.5 3V2h4v1" fill="none" stroke="#fff" stroke-width="1.1"/></svg>
<div class="b" style="left:2525px;top:207px;width:28px;height:32px;background:#4aa99f;"></div>
<svg class="b" style="left:2532px;top:214.5px;" width="17" height="17" viewBox="0 0 17 17"><rect x="2" y="5" width="13" height="9" rx="2.5" fill="none" stroke="#fff" stroke-width="1.1"/><path d="M2 8c3.5 1.5 9.5 1.5 13 0 M6 5V3h5v2" fill="none" stroke="#fff" stroke-width="1.1"/></svg>
<div class="b" style="left:2525px;top:239px;width:28px;height:31px;background:#63d5e2;"></div>
<svg class="b" style="left:2532px;top:246.0px;" width="17" height="17" viewBox="0 0 17 17"><path d="M6 2h5l3.5 3.5V15H6z M11 2v3.5h3.5 M3.5 4v11.5h2.5" fill="none" stroke="#fff" stroke-width="1.1"/></svg>
<div class="b" style="left:2525px;top:270px;width:28px;height:32px;background:#f7f7f7;"></div>
<svg class="b" style="left:2532px;top:277.5px;" width="17" height="17" viewBox="0 0 17 17"><rect x="3" y="3" width="11" height="12.5" rx="2" fill="none" stroke="#888" stroke-width="1.1"/><path d="M6 3V1.8h5V3 M6 7h5 M6 10h5" fill="none" stroke="#888" stroke-width="1.1"/></svg>
<div class="b" style="left:2525px;top:302px;width:28px;height:31px;background:#3ddeb4;"></div>
<svg class="b" style="left:2532px;top:309.0px;" width="17" height="17" viewBox="0 0 17 17"><circle cx="11.5" cy="5.5" r="3.2" fill="none" stroke="#fff" stroke-width="1.1"/><path d="M9.2 7.8L2.5 14.5 M4.5 12.5l1.8 1.8 M6.3 10.7l1.8 1.8" stroke="#fff" stroke-width="1.1"/></svg>
<div class="b" style="left:2525px;top:333px;width:28px;height:32px;background:#c795e9;"></div>
<svg class="b" style="left:2532px;top:340.5px;" width="17" height="17" viewBox="0 0 17 17"><path d="M3 15V9.5 M7 15v-4 M11 15V9 M15 15V6.5 M2.5 7.5l4-3.5 3.5 3 5-5.5 M12.5 1.5h2.5v2.5" fill="none" stroke="#fff" stroke-width="1.1"/></svg>
<div class="b" style="left:2525px;top:365px;width:28px;height:31px;background:#a9a9a9;"></div>
<svg class="b" style="left:2532px;top:372.0px;" width="17" height="17" viewBox="0 0 17 17"><circle cx="8.5" cy="8.5" r="6.5" fill="none" stroke="#fff" stroke-width="1.1"/><path d="M5 9c1-2 2-2 3.5 0s2.5 2 3.5 0" fill="none" stroke="#fff" stroke-width="1.1"/></svg>
<svg class="b" style="left:2500px;top:124px;" width="14" height="14" viewBox="0 0 14 14"><circle cx="7" cy="7" r="6" fill="none" stroke="#9a9a9a" stroke-width="1"/><path d="M4.8 4.8l4.4 4.4 M9.2 4.8l-4.4 4.4" stroke="#9a9a9a" stroke-width="1"/></svg>
<div class="t " style="left:1586.3px;top:143.30px;font-size:19.5px;line-height:24px;color:#3d3d3d;font-weight:400;">Лог</div>
<div class="t " style="left:1588.8px;top:196.60px;font-size:8.8px;line-height:12px;color:#555;font-weight:400;">СОБЫТИЯ</div>
<div class="t " style="left:1661px;top:196.60px;font-size:9.0px;line-height:12px;color:#555;font-weight:400;">АКТИВНОСТЬ</div>
<div class="t " style="left:1748.8px;top:196.60px;font-size:9.1px;line-height:12px;color:#555;font-weight:400;">ТЕХНИЧЕСКИЙ ЛОГ</div>
<div class="b" style="left:1749px;top:211px;width:89px;height:3px;background:#4a9a8b;border-radius:2px;"></div>
<div class="b" style="left:1586px;top:234px;width:131px;height:23px;background:#fff;border:1px solid #cfcfcf;border-radius:12px;box-sizing:border-box;"></div>
<div class="t " style="left:1596px;top:240.50px;font-size:8.0px;line-height:12px;color:#b5b5b5;font-weight:400;">СЕГОДНЯ</div>
<div class="t " style="left:1650px;top:240.50px;font-size:8.0px;line-height:12px;color:#b5b5b5;font-weight:400;">НЕДЕЛЯ</div>
<svg class="b" style="left:1694px;top:239px;" width="14" height="14" viewBox="0 0 14 14"><rect x="1.5" y="2.5" width="11" height="10" rx="1.5" fill="none" stroke="#4a9a8b" stroke-width="1"/><path d="M4 1v2.5 M10 1v2.5" stroke="#4a9a8b"/><path d="M4 6.5h1 M6.5 6.5h1 M9 6.5h1 M4 9h1 M6.5 9h1 M9 9h1" stroke="#4a9a8b" stroke-width="1"/></svg>
<div class="b" style="left:1731px;top:234px;width:217px;height:23px;background:#fff;border:1px solid #cfcfcf;border-radius:12px;box-sizing:border-box;"></div>
<svg class="b" style="left:1738px;top:241px;" width="10" height="10" viewBox="0 0 10 10"><path d="M6.5 1.5L3 5l3.5 3.5" fill="none" stroke="#777" stroke-width="1.1"/></svg>
<svg class="b" style="left:1930px;top:241px;" width="10" height="10" viewBox="0 0 10 10"><path d="M3.5 1.5L7 5 3.5 8.5" fill="none" stroke="#777" stroke-width="1.1"/></svg>
<div class="t" style="left:1754.7px;width:20.0px;text-align:center;top:240.50px;font-size:9.2px;line-height:12px;color:#b0b0b0;font-weight:400;">29</div>
<div class="t" style="left:1779px;width:20px;text-align:center;top:240.50px;font-size:9.2px;line-height:12px;color:#b0b0b0;font-weight:400;">30</div>
<div class="t" style="left:1803.8px;width:20.0px;text-align:center;top:240.50px;font-size:9.2px;line-height:12px;color:#b0b0b0;font-weight:400;">31</div>
<div class="t" style="left:1853.6px;width:20.0px;text-align:center;top:240.50px;font-size:9.2px;line-height:12px;color:#b0b0b0;font-weight:400;">2</div>
<div class="t" style="left:1878.4px;width:20.0px;text-align:center;top:240.50px;font-size:9.2px;line-height:12px;color:#b0b0b0;font-weight:400;">3</div>
<div class="t" style="left:1903px;width:20px;text-align:center;top:240.50px;font-size:9.2px;line-height:12px;color:#b0b0b0;font-weight:400;">4</div>
<div class="b" style="left:1831px;top:236.7px;width:17px;height:17px;background:#4a9a8b;border-radius:50%;"></div>
<div class="t" style="left:1829.5px;width:20.0px;text-align:center;top:239.60px;font-size:9.5px;line-height:12px;color:#fff;font-weight:700;">1</div>
<div class="t " style="left:1586.3px;top:287.20px;font-size:13.5px;line-height:18px;color:#626262;font-weight:700;">Четверг, 1 января 2026</div>
<svg class="b" style="left:2498px;top:288px;" width="14" height="14" viewBox="0 0 14 14"><circle cx="7" cy="7" r="6" fill="none" stroke="#aaa" stroke-width="1"/><path d="M4 5h6 M5 7h4 M6 9h2" stroke="#aaa" stroke-width="1"/></svg>
<div class="b" style="left:1586px;top:313px;width:928px;height:32px;background:#e9e9e9;border-radius:8px 8px 0 0;"></div>
<div class="b" style="left:1660px;top:313px;width:1px;height:32px;background:#dedede;"></div>
<div class="t " style="left:1593.1px;top:325.20px;font-size:9.3px;line-height:12px;color:#333;font-weight:400;">Время</div>
<div class="t " style="left:1672.8px;top:323.30px;font-size:9.5px;line-height:12px;color:#333;font-weight:400;">Событие</div>
<div class="b" style="left:1586px;top:345px;width:928px;height:640px;background:#fff;border-left:1px solid #e2e2e2;border-right:1px solid #e2e2e2;box-sizing:border-box;"></div>
<div class="t " style="left:1594.6px;top:354.10px;font-size:9.5px;line-height:12px;color:#333;font-weight:400;letter-spacing:-0.25px;">07:02:30</div>
<div class="t " style="left:1673px;top:352.00px;font-size:11px;line-height:14px;color:#333;font-weight:700;">Наступила дата контакта &quot;1 число наступного місяця&quot;</div>
<div class="b" style="left:1587px;top:371px;width:73px;height:1px;background:#e4e4e4;"></div>
<div class="b" style="left:1661px;top:371px;width:852px;height:1px;background:#e4e4e4;"></div>
<div class="t " style="left:1673px;top:378.15px;font-size:11.2px;line-height:14px;color:#444;font-weight:400;">Условия сценария "<span class="lk">Створення завдання - Заповнення Е-книги</span>" не выполняются (1=Да, 2=Нет, 3=Да, 4=Да, 5=Да)</div>
<div class="b" style="left:1587px;top:397px;width:73px;height:1px;background:#e4e4e4;"></div>
<div class="b" style="left:1661px;top:397px;width:852px;height:1px;background:#e4e4e4;"></div>
<div class="t " style="left:1594.6px;top:406.90px;font-size:9.5px;line-height:12px;color:#333;font-weight:400;letter-spacing:-0.25px;">07:02:24</div>
<div class="t " style="left:1673px;top:404.80px;font-size:11px;line-height:14px;color:#333;font-weight:700;">Добавлен комментарий</div>
<svg class="b" style="left:2489px;top:403px;" width="16" height="16" viewBox="0 0 16 16"><g transform="rotate(42 8 8)"><path d="M6.2 5H4a3 3 0 0 0 0 6h2.2 M9.8 5H12a3 3 0 0 1 0 6H9.8" fill="none" stroke="#c8c8c8" stroke-width="1.1"/><path d="M5.8 8h4.4" stroke="#bdbdbd" stroke-width="1.1"/></g></svg>
<div class="b" style="left:1587px;top:424px;width:73px;height:1px;background:#e4e4e4;"></div>
<div class="b" style="left:1661px;top:424px;width:852px;height:1px;background:#e4e4e4;"></div>
<div class="t " style="left:1594.6px;top:434.05px;font-size:9.5px;line-height:12px;color:#333;font-weight:400;letter-spacing:-0.25px;">07:02:24</div>
<div class="t " style="left:1673px;top:431.95px;font-size:11px;line-height:14px;color:#333;font-weight:700;">Добавлена строка аналитики: Аналітика компаній</div>
<svg class="b" style="left:2489px;top:430px;" width="16" height="16" viewBox="0 0 16 16"><g transform="rotate(42 8 8)"><path d="M6.2 5H4a3 3 0 0 0 0 6h2.2 M9.8 5H12a3 3 0 0 1 0 6H9.8" fill="none" stroke="#c8c8c8" stroke-width="1.1"/><path d="M5.8 8h4.4" stroke="#bdbdbd" stroke-width="1.1"/></g></svg>
<div class="b" style="left:1587px;top:452px;width:73px;height:1px;background:#e4e4e4;"></div>
<div class="b" style="left:1661px;top:452px;width:852px;height:1px;background:#e4e4e4;"></div>
<div class="t " style="left:1594.6px;top:460.20px;font-size:9.5px;line-height:12px;color:#333;font-weight:400;letter-spacing:-0.25px;">07:02:20</div>
<div class="t " style="left:1673px;top:458.10px;font-size:11px;line-height:14px;color:#333;font-weight:700;">Наступила дата контакта &quot;1 число наступного місяця&quot;</div>
<div class="b" style="left:1587px;top:477px;width:73px;height:1px;background:#e4e4e4;"></div>
<div class="b" style="left:1661px;top:477px;width:852px;height:1px;background:#e4e4e4;"></div>
<div class="t " style="left:1673px;top:483.45px;font-size:11.2px;line-height:14px;color:#444;font-weight:400;">Условия сценария "<span class="lk">Аналітика компаній - Ведення найманих</span>" выполняются (1=Да)</div>
<div class="b" style="left:1587px;top:502px;width:73px;height:1px;background:#e4e4e4;"></div>
<div class="b" style="left:1661px;top:502px;width:852px;height:1px;background:#e4e4e4;"></div>
<svg class="b" style="left:1648px;top:509px;" width="13" height="12" viewBox="0 0 13 12"><rect x="0.5" y="0.5" width="11.5" height="11" rx="2" fill="none" stroke="#bbb" stroke-width="1"/><path d="M4 4.5v4.5 M4 2.8v.6 M8.5 9V4a1.2 1.2 0 0 1 1.5-1.2 M7 5.5h3" fill="none" stroke="#bbb" stroke-width="0.9"/></svg>
<div class="t " style="left:1673px;top:509.25px;font-size:11.2px;line-height:14px;color:#444;font-weight:400;">Выполнены действия сценария "<span class="lk">Аналітика компаній - Ведення найманих</span>"</div>
<div class="b" style="left:1587px;top:528px;width:73px;height:1px;background:#e4e4e4;"></div>
<div class="b" style="left:1661px;top:528px;width:852px;height:1px;background:#e4e4e4;"></div>
<div class="t " style="left:1594.6px;top:537.90px;font-size:9.5px;line-height:12px;color:#333;font-weight:400;letter-spacing:-0.25px;">07:02:15</div>
<div class="t " style="left:1673px;top:535.80px;font-size:11px;line-height:14px;color:#333;font-weight:700;">Добавлен комментарий</div>
<svg class="b" style="left:2489px;top:534px;" width="16" height="16" viewBox="0 0 16 16"><g transform="rotate(42 8 8)"><path d="M6.2 5H4a3 3 0 0 0 0 6h2.2 M9.8 5H12a3 3 0 0 1 0 6H9.8" fill="none" stroke="#c8c8c8" stroke-width="1.1"/><path d="M5.8 8h4.4" stroke="#bdbdbd" stroke-width="1.1"/></g></svg>
<div class="b" style="left:1587px;top:555px;width:73px;height:1px;background:#e4e4e4;"></div>
<div class="b" style="left:1661px;top:555px;width:852px;height:1px;background:#e4e4e4;"></div>
<div class="t " style="left:1594.6px;top:564.95px;font-size:9.5px;line-height:12px;color:#333;font-weight:400;letter-spacing:-0.25px;">07:02:15</div>
<div class="t " style="left:1673px;top:562.85px;font-size:11px;line-height:14px;color:#333;font-weight:700;">Добавлена строка аналитики: Аналітика компаній</div>
<svg class="b" style="left:2489px;top:561px;" width="16" height="16" viewBox="0 0 16 16"><g transform="rotate(42 8 8)"><path d="M6.2 5H4a3 3 0 0 0 0 6h2.2 M9.8 5H12a3 3 0 0 1 0 6H9.8" fill="none" stroke="#c8c8c8" stroke-width="1.1"/><path d="M5.8 8h4.4" stroke="#bdbdbd" stroke-width="1.1"/></g></svg>
<div class="b" style="left:1587px;top:582px;width:73px;height:1px;background:#e4e4e4;"></div>
<div class="b" style="left:1661px;top:582px;width:852px;height:1px;background:#e4e4e4;"></div>
<div class="t " style="left:1594.6px;top:591.10px;font-size:9.5px;line-height:12px;color:#333;font-weight:400;letter-spacing:-0.25px;">07:02:13</div>
<div class="t " style="left:1673px;top:589.00px;font-size:11px;line-height:14px;color:#333;font-weight:700;">Наступила дата контакта &quot;1 число наступного місяця&quot;</div>
<div class="b" style="left:1587px;top:608px;width:73px;height:1px;background:#e4e4e4;"></div>
<div class="b" style="left:1661px;top:608px;width:852px;height:1px;background:#e4e4e4;"></div>
<div class="t " style="left:1673px;top:614.35px;font-size:11.2px;line-height:14px;color:#444;font-weight:400;">Условия сценария "<span class="lk">Аналітика компаній - Відповідальний ПРРО</span>" выполняются (1=Да)</div>
<div class="b" style="left:1587px;top:633px;width:73px;height:1px;background:#e4e4e4;"></div>
<div class="b" style="left:1661px;top:633px;width:852px;height:1px;background:#e4e4e4;"></div>
<svg class="b" style="left:1648px;top:640px;" width="13" height="12" viewBox="0 0 13 12"><rect x="0.5" y="0.5" width="11.5" height="11" rx="2" fill="none" stroke="#bbb" stroke-width="1"/><path d="M4 4.5v4.5 M4 2.8v.6 M8.5 9V4a1.2 1.2 0 0 1 1.5-1.2 M7 5.5h3" fill="none" stroke="#bbb" stroke-width="0.9"/></svg>
<div class="t " style="left:1673px;top:640.35px;font-size:11.2px;line-height:14px;color:#444;font-weight:400;">Выполнены действия сценария "<span class="lk">Аналітика компаній - Відповідальний ПРРО</span>"</div>
<div class="b" style="left:1587px;top:660px;width:73px;height:1px;background:#e4e4e4;"></div>
<div class="b" style="left:1661px;top:660px;width:852px;height:1px;background:#e4e4e4;"></div>
<div class="t " style="left:1594.6px;top:669.10px;font-size:9.5px;line-height:12px;color:#333;font-weight:400;letter-spacing:-0.25px;">07:02:09</div>
<div class="t " style="left:1673px;top:667.00px;font-size:11px;line-height:14px;color:#333;font-weight:700;">Добавлен комментарий</div>
<svg class="b" style="left:2489px;top:665px;" width="16" height="16" viewBox="0 0 16 16"><g transform="rotate(42 8 8)"><path d="M6.2 5H4a3 3 0 0 0 0 6h2.2 M9.8 5H12a3 3 0 0 1 0 6H9.8" fill="none" stroke="#c8c8c8" stroke-width="1.1"/><path d="M5.8 8h4.4" stroke="#bdbdbd" stroke-width="1.1"/></g></svg>
<div class="b" style="left:1587px;top:686px;width:73px;height:1px;background:#e4e4e4;"></div>
<div class="b" style="left:1661px;top:686px;width:852px;height:1px;background:#e4e4e4;"></div>
<div class="t " style="left:1594.6px;top:696.00px;font-size:9.5px;line-height:12px;color:#333;font-weight:400;letter-spacing:-0.25px;">07:02:09</div>
<div class="t " style="left:1673px;top:693.90px;font-size:11px;line-height:14px;color:#333;font-weight:700;">Добавлена строка аналитики: Аналітика компаній</div>
<svg class="b" style="left:2489px;top:692px;" width="16" height="16" viewBox="0 0 16 16"><g transform="rotate(42 8 8)"><path d="M6.2 5H4a3 3 0 0 0 0 6h2.2 M9.8 5H12a3 3 0 0 1 0 6H9.8" fill="none" stroke="#c8c8c8" stroke-width="1.1"/><path d="M5.8 8h4.4" stroke="#bdbdbd" stroke-width="1.1"/></g></svg>
<div class="b" style="left:1587px;top:714px;width:73px;height:1px;background:#e4e4e4;"></div>
<div class="b" style="left:1661px;top:714px;width:852px;height:1px;background:#e4e4e4;"></div>
<div class="t " style="left:1594.6px;top:722.40px;font-size:9.5px;line-height:12px;color:#333;font-weight:400;letter-spacing:-0.25px;">07:02:06</div>
<div class="t " style="left:1673px;top:720.30px;font-size:11px;line-height:14px;color:#333;font-weight:700;">Наступила дата контакта &quot;1 число наступного місяця&quot;</div>
<div class="b" style="left:1587px;top:739px;width:73px;height:1px;background:#e4e4e4;"></div>
<div class="b" style="left:1661px;top:739px;width:852px;height:1px;background:#e4e4e4;"></div>
<div class="t " style="left:1673px;top:745.80px;font-size:11.2px;line-height:14px;color:#444;font-weight:400;">Условия сценария "<span class="lk">Аналітика компаній - Бухгалтерський супровід</span>" выполняются (1=Да)</div>
<div class="b" style="left:1587px;top:764px;width:73px;height:1px;background:#e4e4e4;"></div>
<div class="b" style="left:1661px;top:764px;width:852px;height:1px;background:#e4e4e4;"></div>
<svg class="b" style="left:1648px;top:771px;" width="13" height="12" viewBox="0 0 13 12"><rect x="0.5" y="0.5" width="11.5" height="11" rx="2" fill="none" stroke="#bbb" stroke-width="1"/><path d="M4 4.5v4.5 M4 2.8v.6 M8.5 9V4a1.2 1.2 0 0 1 1.5-1.2 M7 5.5h3" fill="none" stroke="#bbb" stroke-width="0.9"/></svg>
<div class="t " style="left:1673px;top:771.25px;font-size:11.2px;line-height:14px;color:#444;font-weight:400;">Выполнены действия сценария "<span class="lk">Аналітика компаній - Бухгалтерський супровід</span>"</div>
<div class="b" style="left:1587px;top:790px;width:73px;height:1px;background:#e4e4e4;"></div>
<div class="b" style="left:1661px;top:790px;width:852px;height:1px;background:#e4e4e4;"></div>
<div class="t " style="left:1594.6px;top:799.35px;font-size:9.5px;line-height:12px;color:#333;font-weight:400;letter-spacing:-0.25px;">07:01:54</div>
<div class="t " style="left:1673px;top:797.25px;font-size:11px;line-height:14px;color:#333;font-weight:700;">Наступила дата контакта &quot;1 число наступного місяця&quot;</div>
<div class="b" style="left:1587px;top:816px;width:73px;height:1px;background:#e4e4e4;"></div>
<div class="b" style="left:1661px;top:816px;width:852px;height:1px;background:#e4e4e4;"></div>
<div class="t " style="left:1673px;top:823.25px;font-size:11.2px;line-height:14px;color:#444;font-weight:400;">Условия сценария "<span class="lk">Автоматичне створення рахунку - Бухсупровід (місяць)</span>" выполняются (1=Да, 2=Да, 3=Да, 4=Да)</div>
<div class="b" style="left:1587px;top:842px;width:73px;height:1px;background:#e4e4e4;"></div>
<div class="b" style="left:1661px;top:842px;width:852px;height:1px;background:#e4e4e4;"></div>
<div class="t " style="left:1673px;top:848.85px;font-size:11.2px;line-height:14px;color:#444;font-weight:400;">Сценарием создана задача "<span class="lk">Акт № 2820 від 30.01.2026 СОУШЛ ЕКОНОМІ ЮКРЕЙН - Бухсупровід</span>"</div>
<div class="b" style="left:1587px;top:868px;width:73px;height:1px;background:#e4e4e4;"></div>
<div class="b" style="left:1661px;top:868px;width:852px;height:1px;background:#e4e4e4;"></div>
<svg class="b" style="left:1648px;top:875px;" width="13" height="12" viewBox="0 0 13 12"><rect x="0.5" y="0.5" width="11.5" height="11" rx="2" fill="none" stroke="#bbb" stroke-width="1"/><path d="M4 4.5v4.5 M4 2.8v.6 M8.5 9V4a1.2 1.2 0 0 1 1.5-1.2 M7 5.5h3" fill="none" stroke="#bbb" stroke-width="0.9"/></svg>
<div class="t " style="left:1673px;top:874.60px;font-size:11.2px;line-height:14px;color:#444;font-weight:400;">Выполнены действия сценария "<span class="lk">Автоматичне створення рахунку - Бухсупровід (місяць)</span>" (298ms)</div>
<div class="b" style="left:1587px;top:894px;width:73px;height:1px;background:#e4e4e4;"></div>
<div class="b" style="left:1661px;top:894px;width:852px;height:1px;background:#e4e4e4;"></div>
<div class="t " style="left:1594.6px;top:902.50px;font-size:9.5px;line-height:12px;color:#333;font-weight:400;letter-spacing:-0.25px;">07:01:47</div>
<div class="t " style="left:1673px;top:900.40px;font-size:11px;line-height:14px;color:#333;font-weight:700;">Наступила дата контакта &quot;1 число наступного місяця&quot;</div>
<div class="b" style="left:1587px;top:919px;width:73px;height:1px;background:#e4e4e4;"></div>
<div class="b" style="left:1661px;top:919px;width:852px;height:1px;background:#e4e4e4;"></div>
<div class="t " style="left:1673px;top:926.20px;font-size:11.2px;line-height:14px;color:#444;font-weight:400;">Условия сценария "<span class="lk">Автоматичне створення рахунку - Бухсупровід (квартал)</span>" не выполняются (1=Да, 2=Да, 3=Да, 4=Нет, 5=Нет, 6=Нет, 7=Нет)</div>
<div class="b" style="left:1587px;top:945px;width:73px;height:1px;background:#e4e4e4;"></div>
<div class="b" style="left:1661px;top:945px;width:852px;height:1px;background:#e4e4e4;"></div>
<div class="t " style="left:1594.6px;top:953.95px;font-size:9.5px;line-height:12px;color:#333;font-weight:400;letter-spacing:-0.25px;">07:01:32</div>
<div class="t " style="left:1673px;top:951.85px;font-size:11px;line-height:14px;color:#333;font-weight:700;">Наступила дата контакта &quot;1 число наступного місяця&quot;</div>
<div class="b" style="left:1587px;top:971px;width:73px;height:1px;background:#e4e4e4;"></div>
<div class="b" style="left:1661px;top:971px;width:852px;height:1px;background:#e4e4e4;"></div>
<div class="t " style="left:1673px;top:977.20px;font-size:11.2px;line-height:14px;color:#444;font-weight:400;">Условия сценария "<span class="lk">Автоматичне створення рахунку - Ведення найманих (місяць)</span>" выполняются (1=Да, 2=Да, 3=Да)</div>
</body></html>
